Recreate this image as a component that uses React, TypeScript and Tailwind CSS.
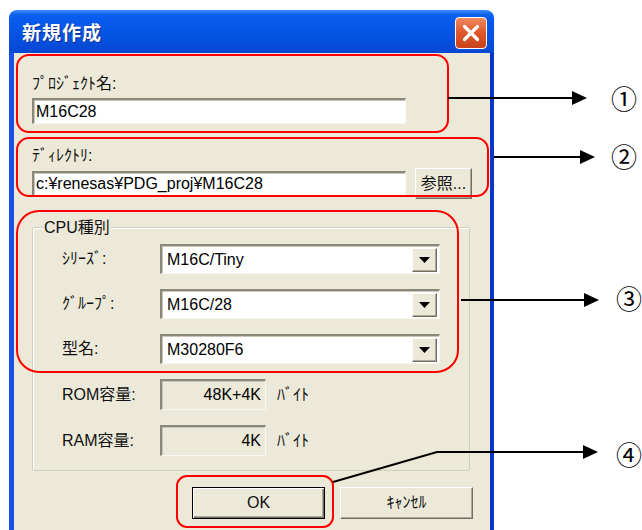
import React from 'react';

const jp = "font-['Liberation_Sans','Noto_Sans_CJK_JP',sans-serif]";

const sunken =
  'border-t-2 border-l-2 border-b border-r border-t-[#8a877b] border-l-[#8a877b] border-b-[#f7f6f0] border-r-[#f7f6f0] shadow-[inset_1px_1px_0_#c9c6b8]';

const Combo: React.FC<{ value: string }> = ({ value }) => (
  <div className={`flex h-[30px] w-[280px] items-center justify-between bg-white pl-[5px] pr-[2px] ${sunken}`}>
    <span className="text-[16px] leading-none text-black">{value}</span>
    <div className="flex h-[24px] w-[25px] items-center justify-center border border-t-white border-l-white border-b-[#716f64] border-r-[#716f64] bg-[#ece9d8] shadow-[inset_-1px_-1px_0_#aca899]">
      <svg width="11" height="6" viewBox="0 0 11 6">
        <polygon points="0,0 11,0 5.5,6" fill="#000" />
      </svg>
    </div>
  </div>
);

const Row: React.FC<{ label: string; children: React.ReactNode }> = ({ label, children }) => (
  <div className="flex items-center">
    <span className="w-[98px] text-[16px] leading-none text-[#111]">{label}</span>
    {children}
  </div>
);

const SizeBox: React.FC<{ value: string }> = ({ value }) => (
  <div className="flex items-center gap-[11px]">
    <div className={`flex h-[31px] w-[106px] items-center justify-end bg-[#ece9d8] pr-[4px] ${sunken}`}>
      <span className="text-[16px] leading-none text-black">{value}</span>
    </div>
    <span className="text-[16px] leading-none text-[#111]">ﾊﾞｲﾄ</span>
  </div>
);

export default function App() {
  return (
    <div className={`relative h-[530px] w-[642px] overflow-hidden bg-white ${jp}`}>
      {/* dialog */}
      <div className="ml-[9px] mt-[10px] flex w-[485px] flex-col">
        <div className="flex h-[43px] items-start justify-between rounded-t-[8px] bg-[linear-gradient(180deg,#3b8cf8_0%,#0a5ef0_12%,#0553e4_55%,#0648d2_100%)] pl-[13px] pr-[7px] pt-[7px]">
          <span className="pt-[4px] text-[19px] font-bold leading-[26px] tracking-[1px] text-white [text-shadow:1px_1px_0_#0a2a8e]">
            新規作成
          </span>
          <div className="flex h-[32px] w-[32px] items-center justify-center rounded-[4px] border border-white bg-[linear-gradient(180deg,#f08a62_0%,#e05a2c_45%,#c9421a_100%)]">
            <svg width="18" height="18" viewBox="0 0 18 18">
              <path d="M2.5 2.5 L15.5 15.5 M15.5 2.5 L2.5 15.5" stroke="#fff" strokeWidth="3.2" strokeLinecap="round" />
            </svg>
          </div>
        </div>

        <div className="flex h-[480px] flex-col border-l-[5px] border-r-[4px] border-l-[#1650e8] border-r-[#0a36c8] bg-[#ece9d8] pl-[18px] pt-[23px]">
          <span className="h-[20px] text-[16px] leading-none text-[#111]">ﾌﾟﾛｼﾞｪｸﾄ名:</span>
          <div className={`mt-[2px] flex h-[26px] w-[374px] items-center bg-white pl-[2px] ${sunken}`}>
            <span className="text-[16px] leading-none text-black">M16C28</span>
          </div>

          <span className="mt-[24px] h-[20px] text-[16px] leading-none text-[#111]">ﾃﾞｨﾚｸﾄﾘ:</span>
          <div className="flex h-[31px] items-center gap-[9px]">
            <div className={`flex h-[25px] w-[374px] items-center bg-white pl-[2px] ${sunken}`}>
              <span className="text-[16px] leading-none text-black">c:¥renesas¥PDG_proj¥M16C28</span>
            </div>
            <div className="flex h-[31px] w-[57px] items-center justify-center border border-t-white border-l-white border-b-[#716f64] border-r-[#716f64] bg-[#ece9d8] shadow-[inset_-1px_-1px_0_#aca899]">
              <span className="text-[16px] leading-none text-[#111]">参照...</span>
            </div>
          </div>

          {/* group box */}
          <div className="relative mt-[28px] flex h-[244px] w-[438px] flex-col gap-[15px] rounded-[2px] border border-[#d0d0bf] pl-[29px] pt-[16px] shadow-[inset_1px_1px_0_#fff]">
            <span className="absolute left-[10px] top-[-10px] bg-[#ece9d8] px-[1px] text-[16px] leading-[20px] text-[#111]">
              CPU種別
            </span>
            <Row label="ｼﾘｰｽﾞ:">
              <Combo value="M16C/Tiny" />
            </Row>
            <Row label="ｸﾞﾙｰﾌﾟ:">
              <Combo value="M16C/28" />
            </Row>
            <Row label="型名:">
              <Combo value="M30280F6" />
            </Row>
            <Row label="ROM容量:">
              <SizeBox value="48K+4K" />
            </Row>
            <Row label="RAM容量:">
              <SizeBox value="4K" />
            </Row>
          </div>

          <div className="mt-[16px] flex gap-[15px] pl-[160px]">
            <div className="flex h-[32px] w-[133px] items-center justify-center border border-black bg-[#ece9d8] shadow-[inset_1px_1px_0_#fff,inset_-1px_-1px_0_#716f64,inset_-2px_-2px_0_#aca899]">
              <span className="text-[16px] leading-none text-[#111]">OK</span>
            </div>
            <div className="flex h-[32px] w-[133px] items-center justify-center border border-t-white border-l-white border-b-[#716f64] border-r-[#716f64] bg-[#ece9d8] shadow-[inset_-1px_-1px_0_#aca899]">
              <span className="text-[16px] leading-none text-[#111]">ｷｬﾝｾﾙ</span>
            </div>
          </div>
        </div>
      </div>

      {/* annotation overlay */}
      <svg className="pointer-events-none absolute left-0 top-0" width="642" height="530" viewBox="0 0 642 530">
        <g fill="none" stroke="#ff0000" strokeWidth="2">
          <rect x="17" y="55" width="431" height="77" rx="12" />
          <rect x="17" y="138" width="471" height="58" rx="12" />
          <rect x="17" y="211" width="441" height="161" rx="22" />
          <rect x="177" y="476" width="156" height="51" rx="10" />
        </g>
        <g stroke="#000" strokeWidth="2" fill="none">
          <path d="M448 98 H574" />
          <path d="M494 157 H582" />
          <path d="M461 300 H586" />
          <path d="M333 482 L437 452 H585" />
        </g>
        <g fill="#000">
          <polygon points="572,91 587,98 572,105" />
          <polygon points="580,150 595,157 580,164" />
          <polygon points="584,293 599,300 584,307" />
          <polygon points="583,445 598,452 583,459" />
        </g>
      </svg>
      <span className="absolute left-[611px] top-[86px] font-['DejaVu_Serif','Noto_Sans_CJK_JP',serif] text-[26px] leading-[28px] text-black">①</span>
      <span className="absolute left-[611px] top-[144px] font-['DejaVu_Serif','Noto_Sans_CJK_JP',serif] text-[26px] leading-[28px] text-black">②</span>
      <span className="absolute left-[616px] top-[286px] font-['DejaVu_Serif','Noto_Sans_CJK_JP',serif] text-[26px] leading-[28px] text-black">③</span>
      <span className="absolute left-[616px] top-[442px] font-['DejaVu_Serif','Noto_Sans_CJK_JP',serif] text-[26px] leading-[28px] text-black">④</span>
    </div>
  );
}
